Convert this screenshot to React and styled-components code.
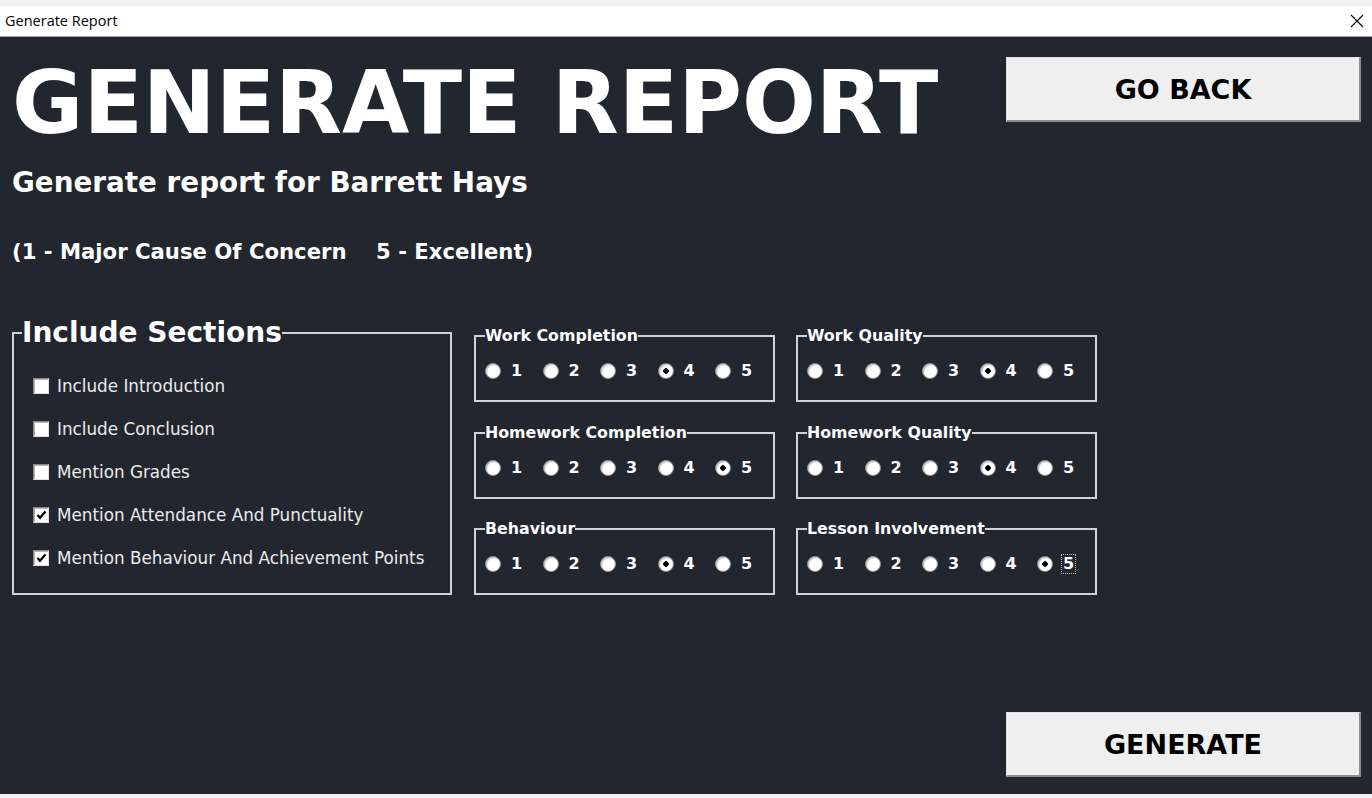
import React from "react";
import styled, { createGlobalStyle } from "styled-components";

const GlobalStyle = createGlobalStyle`
  html, body {
    margin: 0;
    padding: 0;
    background: #f0f0f0;
  }
  * {
    box-sizing: border-box;
  }
`;

const FONT = `"DejaVu Sans", Verdana, sans-serif`;

const Window = styled.div`
  width: 1372px;
  height: 798px;
  display: flex;
  flex-direction: column;
  padding: 6px 0 4px;
  background: #f0f0f0;
  overflow: hidden;
`;

const TitleBar = styled.div`
  flex: none;
  height: 31px;
  background: #ffffff;
  border-bottom: 1px solid #a3a3a3;
  display: flex;
  align-items: center;
  justify-content: space-between;
  padding: 0 8px 1px 5px;
  font-family: "Open Sans", "Noto Sans", sans-serif;
  font-size: 14.5px;
  color: #000;
`;

const CloseIcon = styled.svg`
  width: 14px;
  height: 14px;
`;

const Body = styled.div`
  flex: 1;
  background: #22262f;
  display: grid;
  grid-template-columns: minmax(0, 1fr) 355px;
  padding: 0 11px 17px 12px;
  color: #ffffff;
  font-family: ${FONT};
`;

const Main = styled.div`
  display: flex;
  flex-direction: column;
  min-width: 0;
`;

const Title = styled.h1`
  margin: 23px 0 0;
  font-size: 87px;
  line-height: 86px;
  font-weight: bold;
  white-space: nowrap;
`;

const Subtitle = styled.h2`
  margin: 20px 0 0;
  font-size: 27.8px;
  line-height: 34px;
  font-weight: bold;
`;

const Scale = styled.p`
  margin: 39px 0 0;
  font-size: 21.2px;
  line-height: 26px;
  font-weight: bold;
  white-space: pre;
`;

const SectionsRow = styled.div`
  display: flex;
  align-items: flex-start;
  gap: 22px;
  margin-top: 52px;
`;

const Group = styled.fieldset`
  margin: 0;
  min-width: 0;
  border: 2px solid #d2d2d2;
`;

const IncludeGroup = styled(Group)`
  width: 440px;
  flex: none;
  padding: 15px 8px 14px;
`;

const BigLegend = styled.legend`
  padding: 0;
  font-size: 28px;
  line-height: 32px;
  font-weight: bold;
`;

const CheckList = styled.div`
  display: flex;
  flex-direction: column;
  padding-left: 11px;
`;

const CheckRow = styled.label`
  height: 43px;
  display: flex;
  align-items: center;
  gap: 8px;
  font-size: 16.8px;
  color: #ececec;
`;

const CheckBox = styled.span`
  width: 16px;
  height: 16px;
  flex: none;
  background: #ffffff;
  border: 1px solid;
  border-color: #8a8a8a #e0e0e0 #e0e0e0 #8a8a8a;
  box-shadow: inset 1px 1px 0 #b5b5b5;
  display: flex;
  align-items: center;
  justify-content: center;
`;

const RadioGrid = styled.div`
  display: grid;
  grid-template-columns: 301px 301px;
  column-gap: 21px;
  row-gap: 21.5px;
  margin-top: 10px;
`;

const RadioGroup = styled(Group)`
  padding: 16px 9px 19px;
`;

const SmallLegend = styled.legend`
  padding: 0;
  font-size: 15.8px;
  line-height: 18px;
  font-weight: bold;
`;

const RadioRow = styled.div`
  display: flex;
  height: 20px;
  align-items: center;
`;

const RadioOption = styled.label`
  flex: none;
  width: 57.5px;
  display: flex;
  align-items: center;
  gap: 9px;
  font-size: 16px;
  font-weight: bold;

  &:last-child {
    width: auto;
  }
`;

const RadioDot = styled.span`
  width: 16px;
  height: 16px;
  flex: none;
  border-radius: 50%;
  background: ${({ checked }) =>
    checked
      ? "radial-gradient(circle, #000 0 2.5px, #fff 3px)"
      : "#ffffff"};
  border: 1px solid #8f8f8f;
  box-shadow: inset 1px 1px 1px #bdbdbd;
`;

const Num = styled.span`
  line-height: 18px;
  padding: 0 1px;
  outline: ${({ focused }) => (focused ? "1px dotted #bdbdbd" : "none")};
  outline-offset: 0;
`;

const Side = styled.div`
  display: flex;
  flex-direction: column;
  justify-content: space-between;
  padding-top: 20px;
`;

const Button = styled.button`
  height: 65px;
  width: 100%;
  background: #efefef;
  border-style: solid;
  border-width: 1px 2px 2px 1px;
  border-color: #e2e2e2 #8c8c8c #8c8c8c #e2e2e2;
  font-family: ${FONT};
  font-size: 27px;
  font-weight: bold;
  color: #000;
  cursor: pointer;
`;

const sections = [
  { label: "Include Introduction", checked: false },
  { label: "Include Conclusion", checked: false },
  { label: "Mention Grades", checked: false },
  { label: "Mention Attendance And Punctuality", checked: true },
  { label: "Mention Behaviour And Achievement Points", checked: true },
];

const ratings = [
  { name: "Work Completion", value: 4 },
  { name: "Work Quality", value: 4 },
  { name: "Homework Completion", value: 5 },
  { name: "Homework Quality", value: 4 },
  { name: "Behaviour", value: 4 },
  { name: "Lesson Involvement", value: 5, focus: true },
];

const Check = () => (
  <svg width="11" height="10" viewBox="0 0 11 10">
    <path d="M1.5 5 L4 7.8 L9.5 1.5" fill="none" stroke="#000" strokeWidth="2.2" />
  </svg>
);

const App = () => {
  return (
    <Window>
      <GlobalStyle />
      <TitleBar>
        <span>Generate Report</span>
        <CloseIcon viewBox="0 0 14 14">
          <path d="M1 1 L13 13 M13 1 L1 13" stroke="#000" strokeWidth="1.1" />
        </CloseIcon>
      </TitleBar>
      <Body>
        <Main>
          <Title>GENERATE REPORT</Title>
          <Subtitle>Generate report for Barrett Hays</Subtitle>
          <Scale>{"(1 - Major Cause Of Concern    5 - Excellent)"}</Scale>
          <SectionsRow>
            <IncludeGroup>
              <BigLegend>Include Sections</BigLegend>
              <CheckList>
                {sections.map((s) => (
                  <CheckRow key={s.label}>
                    <CheckBox>{s.checked && <Check />}</CheckBox>
                    {s.label}
                  </CheckRow>
                ))}
              </CheckList>
            </IncludeGroup>
            <RadioGrid>
              {ratings.map((r) => (
                <RadioGroup key={r.name}>
                  <SmallLegend>{r.name}</SmallLegend>
                  <RadioRow>
                    {[1, 2, 3, 4, 5].map((n) => (
                      <RadioOption key={n}>
                        <RadioDot checked={r.value === n} />
                        <Num focused={r.focus && r.value === n}>{n}</Num>
                      </RadioOption>
                    ))}
                  </RadioRow>
                </RadioGroup>
              ))}
            </RadioGrid>
          </SectionsRow>
        </Main>
        <Side>
          <Button>GO BACK</Button>
          <Button>GENERATE</Button>
        </Side>
      </Body>
    </Window>
  );
};

export default App;
